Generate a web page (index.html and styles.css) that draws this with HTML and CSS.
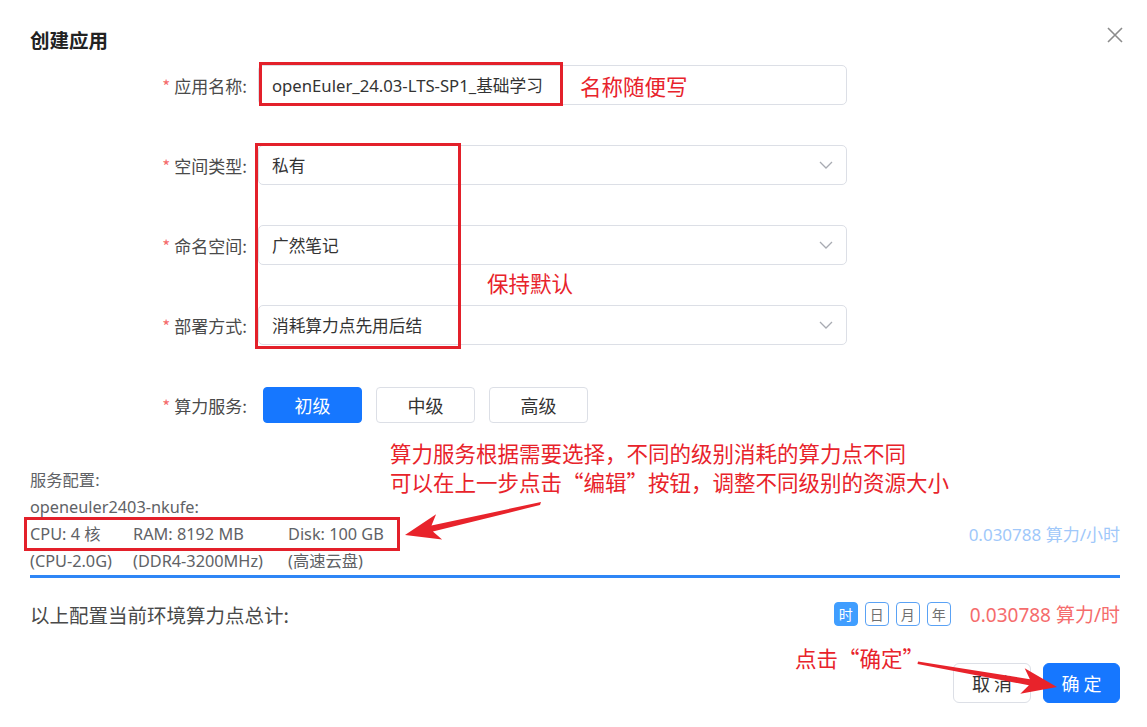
FILE: index.html
```html
<!DOCTYPE html>
<html lang="zh-CN">
<head>
<meta charset="utf-8">
<title>创建应用</title>
<link rel="stylesheet" href="styles.css">
</head>
<body>
<div class="dialog">
  <header class="dlg-head">
    <h2 class="dlg-title">创建应用</h2>
    <button class="dlg-close" aria-label="关闭">
      <svg width="16" height="16" viewBox="0 0 16 16"><path d="M1 1L15 15M15 1L1 15" stroke="#8c8c8c" stroke-width="1.6" fill="none"/></svg>
    </button>
  </header>

  <div class="dlg-body">
    <div class="form">
      <div class="form-item">
        <label class="form-label"><span class="req">*</span>应用名称:</label>
        <div class="control"><div class="input">openEuler_24.03-LTS-SP1_基础学习</div></div>
      </div>
      <div class="form-item">
        <label class="form-label"><span class="req">*</span>空间类型:</label>
        <div class="control"><div class="input select">私有<svg class="chev" width="14" height="8" viewBox="0 0 14 8"><path d="M1 1L7 7L13 1" stroke="#a8abb2" stroke-width="1.3" fill="none"/></svg></div></div>
      </div>
      <div class="form-item">
        <label class="form-label"><span class="req">*</span>命名空间:</label>
        <div class="control"><div class="input select">广然笔记<svg class="chev" width="14" height="8" viewBox="0 0 14 8"><path d="M1 1L7 7L13 1" stroke="#a8abb2" stroke-width="1.3" fill="none"/></svg></div></div>
      </div>
      <div class="form-item">
        <label class="form-label"><span class="req">*</span>部署方式:</label>
        <div class="control"><div class="input select">消耗算力点先用后结<svg class="chev" width="14" height="8" viewBox="0 0 14 8"><path d="M1 1L7 7L13 1" stroke="#a8abb2" stroke-width="1.3" fill="none"/></svg></div></div>
      </div>
      <div class="form-item">
        <label class="form-label"><span class="req">*</span>算力服务:</label>
        <div class="control tiers">
          <button class="tier active">初级</button>
          <button class="tier">中级</button>
          <button class="tier">高级</button>
        </div>
      </div>
    </div>

    <section class="svc">
      <div class="svc-line full">服务配置:</div>
      <div class="svc-line full">openeuler2403-nkufe:</div>
      <div class="svc-line">CPU: 4 核</div>
      <div class="svc-line">RAM: 8192 MB</div>
      <div class="svc-line">Disk: 100 GB</div>
      <div class="svc-price">0.030788 算力/小时</div>
      <div class="svc-line">(CPU-2.0G)</div>
      <div class="svc-line">(DDR4-3200MHz)</div>
      <div class="svc-line">(高速云盘)</div>
    </section>

    <div class="total">
      <div class="total-label">以上配置当前环境算力点总计:</div>
      <div class="total-right">
        <div class="units">
          <span class="unit active">时</span>
          <span class="unit">日</span>
          <span class="unit">月</span>
          <span class="unit">年</span>
        </div>
        <div class="total-price">0.030788 算力/时</div>
      </div>
    </div>
  </div>

  <footer class="dlg-foot">
    <button class="btn">取 消</button>
    <button class="btn primary">确 定</button>
  </footer>

  <div class="mark box1"></div>
  <div class="mark box2"></div>
  <div class="mark box3"></div>
  <div class="note note1">名称随便写</div>
  <div class="note note2">保持默认</div>
  <div class="note note3">算力服务根据需要选择，不同的级别消耗的算力点不同<br>可以在上一步点击“编辑”按钮，调整不同级别的资源大小</div>
  <div class="note note4">点击“确定”</div>
  <svg class="arrows" width="1147" height="727" viewBox="0 0 1147 727">
    <polygon fill="#e8232b" points="541,502 431.5,525.6 436.1,514.3 405,535 442.1,539.5 432.9,531.4 540,505"/>
    <polygon fill="#e8232b" points="918,661.5 1029.9,679.2 1024.7,668.2 1057,687 1020.3,693.8 1028.9,685.2 917.5,664"/>
  </svg>
</div>
</body>
</html>
```

FILE: styles.css
```css
* { box-sizing: border-box; }
html, body { margin: 0; padding: 0; background: #fff; }
body {
  font-family: "Noto Sans", "Noto Sans CJK SC", sans-serif;
  color: #333;
}
.dialog {
  position: relative;
  width: 1147px;
  height: 727px;
  overflow: hidden;
  background: #fff;
}
.dlg-head {
  display: flex;
  justify-content: space-between;
  align-items: flex-start;
  padding: 27px 24px 0 30px;
  height: 52px;
}
.dlg-title {
  margin: 0;
  font-size: 19.5px;
  line-height: 26px;
  font-weight: 700;
  color: #222;
  font-family: "Noto Sans CJK SC", sans-serif;
}
.dlg-close {
  border: 0;
  background: none;
  padding: 0;
  margin-top: 0;
  width: 16px;
  height: 16px;
  cursor: pointer;
}
.dlg-body { padding: 0 27px 0 0; }
.form { margin-top: 13px; }
.form-item {
  display: flex;
  align-items: center;
  height: 40px;
  margin-bottom: 40px;
}
.form-item:last-child { margin-bottom: 0; }
.form-label {
  width: 258px;
  padding-right: 11px;
  text-align: right;
  font-size: 17px;
  color: #4a4a4a;
  font-family: "Noto Sans CJK SC", sans-serif;
}
.req { color: #f56c6c; margin-right: 4px; }
.control { width: 589px; }
.input {
  height: 40px;
  border: 1px solid #dcdfe6;
  border-radius: 5px;
  padding: 0 13px 0 13px;
  display: flex;
  align-items: center;
  font-size: 16.7px;
  color: #333;
  font-family: "Noto Sans", "Noto Sans CJK SC", sans-serif;
}
.select { justify-content: space-between; }
.chev { margin-right: 0; }
.tiers { display: flex; gap: 14px; padding-left: 5px; }
.tier {
  width: 99px;
  height: 36px;
  border: 1px solid #dcdfe6;
  border-radius: 4px;
  background: #fff;
  font-size: 18px;
  color: #333;
  font-family: "Noto Sans CJK SC", sans-serif;
  padding: 0;
}
.tier.active { background: #1677ff; border-color: #1677ff; color: #fff; }

.svc {
  margin: 42px 0 0 30px;
  display: grid;
  grid-template-columns: 103px 155px 1fr auto;
  border-bottom: 3px solid #2f86f6;
  font-size: 16.3px;
  color: #606266;
}
.svc-line { line-height: 27px; white-space: nowrap; }
.svc-line.full { grid-column: 1 / -1; }
.svc-price {
  grid-row: 3;
  grid-column: 4;
  line-height: 27px;
  font-size: 17px;
  color: #a0c8fa;
}
.total {
  margin: 24px 0 0 30px;
  height: 24px;
  display: flex;
  justify-content: space-between;
  align-items: center;
}
.total-label { font-size: 19.5px; color: #4a4a4a; font-family: "Noto Sans CJK SC", sans-serif; }
.total-right { display: flex; align-items: center; gap: 19px; }
.units { display: flex; gap: 7px; }
.unit {
  width: 24px;
  height: 24px;
  border: 1px solid #5aa2f5;
  border-radius: 4px;
  display: flex;
  align-items: center;
  justify-content: center;
  font-size: 14px;
  color: #707070;
  font-family: "Noto Sans CJK SC", sans-serif;
}
.unit.active { background: #409eff; border-color: #409eff; color: #fff; }
.total-price { font-size: 19px; color: #f56c6c; }

.dlg-foot {
  display: flex;
  justify-content: flex-end;
  gap: 12px;
  padding: 0 27px 0 0;
  margin-top: 37px;
}
.btn {
  height: 40px;
  width: 78px;
  border: 1px solid #dcdfe6;
  border-radius: 6px;
  background: #fff;
  font-size: 18px;
  color: #333;
  font-family: "Noto Sans CJK SC", sans-serif;
  padding: 0;
}
.btn.primary { width: 77px; background: #1677ff; border-color: #1677ff; color: #fff; }

.mark { position: absolute; border: 3px solid #e3202a; }
.box1 { left: 259px; top: 62px; width: 304px; height: 44px; }
.box2 { left: 255px; top: 143px; width: 206px; height: 206px; }
.box3 { left: 24px; top: 517px; width: 376px; height: 34px; }
.note {
  position: absolute;
  color: #e8232b;
  font-size: 21.5px;
  line-height: 24px;
  font-family: "Noto Sans CJK SC", sans-serif;
  white-space: nowrap;
}
.note1 { left: 580px; top: 74px; }
.note2 { left: 487px; top: 271px; }
.note3 { left: 390px; top: 438px; line-height: 29px; }
.note4 { left: 795px; top: 646px; }
.arrows { position: absolute; left: 0; top: 0; pointer-events: none; }
```
